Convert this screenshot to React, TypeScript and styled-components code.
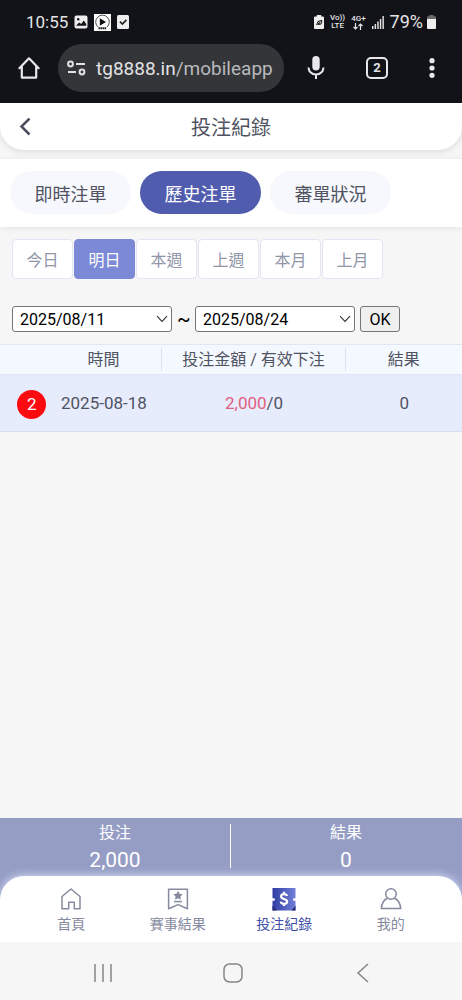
import React, { useState } from "react";
import styled, { createGlobalStyle } from "styled-components";

const GlobalStyle = createGlobalStyle`
  *, *::before, *::after { box-sizing: border-box; }
  body { margin: 0; background: #f6f6f6; }
  body, button, select {
    font-family: Roboto, "Noto Sans CJK TC", sans-serif;
  }
  button { border: 0; padding: 0; background: none; color: inherit; cursor: pointer; }
  svg { display: block; flex: none; }
`;

const Page = styled.div`
  display: flex;
  flex-direction: column;
  min-height: 100vh;
  color: #505362;
`;

const Chrome = styled.header`
  height: 103px;
  background: #121318;
  color: #e4e4e8;
`;

const StatusBar = styled.div`
  display: flex;
  align-items: center;
  justify-content: space-between;
  height: 44px;
  padding: 0 26px;
`;

const StatusGroup = styled.div<{ $gap: number }>`
  display: flex;
  align-items: center;
  gap: ${(p) => p.$gap}px;
`;

const StatusText = styled.span<{ $size: number }>`
  font-size: ${(p) => p.$size}px;
  line-height: 20px;
`;

const Carrier = styled.span`
  display: flex;
  flex-direction: column;
  align-items: center;
  font-size: 8px;
  line-height: 8px;
  font-weight: 500;
`;

const AddressBar = styled.div`
  display: flex;
  align-items: center;
  height: 48px;
  padding: 0 27px 0 17px;
`;

const Address = styled.div`
  display: flex;
  align-items: center;
  gap: 10px;
  flex: 1;
  min-width: 0;
  height: 48px;
  margin: 0 23px 0 17px;
  padding: 0 9px;
  border-radius: 24px;
  background: #343539;
  font-size: 19px;
  white-space: nowrap;
  overflow: hidden;
`;

const Url = styled.span`
  overflow: hidden;
  color: #e2e2e5;
  span { color: #b9babd; }
`;

const BarButtons = styled.div`
  display: flex;
  align-items: center;
  gap: 41px;
`;

const TitleBar = styled.div`
  display: grid;
  grid-template-columns: 50px 1fr 50px;
  align-items: center;
  height: 47px;
  border-radius: 0 0 24px 24px;
  background: #fff;
  box-shadow: 0 2px 6px rgba(0, 0, 0, 0.1);
`;

const BackButton = styled.button`
  display: grid;
  place-items: center;
  height: 47px;
`;

const Title = styled.h1`
  margin: 0;
  padding-top: 2px;
  font-size: 20px;
  line-height: 30px;
  font-weight: 400;
  text-align: center;
`;

const TypeTabs = styled.nav`
  display: flex;
  gap: 9px;
  margin-top: 9px;
  padding: 12px 10px 13px;
  background: #fff;
  box-shadow: 0 1px 6px rgba(0, 0, 0, 0.08);
`;

const TypeTab = styled.button<{ $active: boolean }>`
  width: 121px;
  height: 43px;
  border-radius: 22px;
  background: ${(p) => (p.$active ? "#505cae" : "#f7f8fd")};
  color: ${(p) => (p.$active ? "#fff" : "#505362")};
  font-size: 18px;
`;

const Periods = styled.div`
  display: flex;
  gap: 1px;
  padding: 12px 12px 0;
`;

const Period = styled.button<{ $active: boolean }>`
  width: 61px;
  height: 40px;
  border: 1px solid ${(p) => (p.$active ? "#7b89d6" : "#e3e5f3")};
  border-radius: 4px;
  background: ${(p) => (p.$active ? "#7b89d6" : "#fff")};
  color: ${(p) => (p.$active ? "#fff" : "#9195a8")};
  font-size: 16px;
`;

const RangeForm = styled.form`
  display: flex;
  align-items: center;
  gap: 5px;
  padding: 27px 12px 12px;
  color: #000;
  font-size: 16px;
`;

const SelectBox = styled.label`
  display: grid;
  grid-template-columns: 1fr 16px;
  align-items: center;
  width: 160px;
  > svg { grid-area: 1 / 2; pointer-events: none; }
`;

const DateSelect = styled.select`
  grid-area: 1 / 1 / 2 / 3;
  appearance: none;
  width: 100%;
  height: 26px;
  padding: 0 7px;
  border: 1px solid #767676;
  border-radius: 3px;
  background: #fff;
  color: #000;
  font-size: 16px;
`;

const Tilde = styled.span`
  width: 13px;
  text-align: center;
  font-size: 20px;
  line-height: 26px;
`;

const OkButton = styled.button`
  width: 40px;
  height: 26px;
  border: 1px solid #767676;
  border-radius: 3px;
  background: #efefef;
  font-size: 16px;
`;

const Records = styled.table`
  width: 100%;
  table-layout: fixed;
  border-collapse: collapse;
  font-size: 16px;
  text-align: center;
`;

const HeadCell = styled.th<{ $width: string; $divided?: boolean }>`
  width: ${(p) => p.$width};
  height: 29px;
  padding: 3px 0;
  border-top: 1px solid #e1e6f4;
  border-bottom: 1px solid #e1e6f4;
  background: #f4f8ff;
  font-weight: 400;
  line-height: 24px;
  span {
    display: block;
    height: 23px;
    border-right: 1px solid ${(p) => (p.$divided ? "#dde1ee" : "transparent")};
  }
`;

const Cell = styled.td`
  height: 57px;
  padding: 0;
  border-bottom: 1px solid #d8def1;
  background: #e7ecfd;
  font-size: 17px;
`;

const Badge = styled.span`
  display: grid;
  place-items: center;
  width: 29px;
  height: 29px;
  margin: 2px 0 0 auto;
  border-radius: 50%;
  background: #fb0b10;
  color: #fff;
`;

const Stake = styled.span`
  color: #df6080;
`;

const Summary = styled.section`
  display: grid;
  grid-template-columns: 1fr 1fr;
  margin-top: auto;
  padding: 6px 0 32px;
  background: #959dc5;
  color: #fff;
  text-align: center;
`;

const Total = styled.div<{ $divided?: boolean }>`
  height: 44px;
  border-right: 1px solid ${(p) => (p.$divided ? "#fff" : "transparent")};
  font-size: 16px;
  line-height: 18px;
`;

const TotalValue = styled.div`
  margin-top: 6px;
  font-size: 21px;
  line-height: 24px;
`;

const TabBar = styled.nav`
  display: grid;
  grid-template-columns: repeat(4, 1fr);
  height: 66px;
  margin-top: -24px;
  padding: 0 18px;
  border-radius: 24px 24px 0 0;
  background: #fff;
  box-shadow: 0 -1px 8px rgba(225, 231, 255, 0.8);
`;

const TabLink = styled.a<{ $active?: boolean }>`
  display: flex;
  flex-direction: column;
  align-items: center;
  gap: 2px;
  padding-top: 11px;
  color: ${(p) => (p.$active ? "#414fa8" : "#858a9e")};
  font-size: 14px;
  line-height: 22px;
  text-decoration: none;
`;

const SystemBar = styled.footer`
  display: flex;
  align-items: center;
  justify-content: space-around;
  height: 58px;
  padding: 4px 35px 0 38px;
  background: #f6f6f6;
  color: #85868b;
`;

const Chevron = () => (
  <svg width="12" height="8" viewBox="0 0 12 8" fill="none" stroke="#333" strokeWidth="1.1">
    <path d="M1 1.2 6 6.4 11 1.2" />
  </svg>
);

const PictureIcon = () => (
  <svg width="14" height="14" viewBox="0 0 14 14">
    <rect x=".5" y=".5" width="13" height="13" rx="2" fill="#eee" />
    <circle cx="4.2" cy="4.2" r="1.2" fill="#121318" />
    <path d="M2 10.8 5.2 7.4l2 1.6 2.6-3.4L12.2 9v1.8z" fill="#121318" />
  </svg>
);

const PlayerIcon = () => (
  <svg width="17" height="17" viewBox="0 0 17 17">
    <rect width="17" height="17" fill="#fff" />
    <path d="M4.2 13.2a6.8 6.8 0 1 1 8.6 0" fill="none" stroke="#222" strokeWidth=".8" />
    <path d="M5.8 4.2v7.6l6.2-3.8z" fill="#111" />
    <path d="M4.5 14.2h8" stroke="#222" strokeWidth="2" strokeDasharray="1.6 .4" />
  </svg>
);

const CheckedIcon = () => (
  <svg width="12" height="14" viewBox="0 0 12 14">
    <rect width="12" height="14" rx="1.5" fill="#eee" />
    <path d="m3 6.6 2.4 2.4 4-4.2" fill="none" stroke="#222" strokeWidth="1.7" />
  </svg>
);

const SaverIcon = () => (
  <svg width="10" height="14" viewBox="0 0 10 14">
    <path d="M2.8 1.4V0h4.4v1.4H9a1 1 0 0 1 1 1V13a1 1 0 0 1-1 1H1a1 1 0 0 1-1-1V2.4a1 1 0 0 1 1-1z" fill="#eee" />
    <path d="M2 9.2h2.2M4.200 9.200C2.600 7.200 4.200 5.800 7.700 5.600c.3 2.600-.9 4.200-3.500 3.600zM4.200 9.200l1.800-1.800" fill="none" stroke="#222" strokeWidth="1.1" />
  </svg>
);

const DataArrows = () => (
  <svg width="10" height="7" viewBox="0 0 10 7" fill="none" stroke="currentColor" strokeWidth="1.2">
    <path d="M2.5 0v6M.5 4l2 2 2-2M7.5 7V1M5.5 3l2-2 2 2" />
  </svg>
);

const SignalIcon = () => (
  <svg width="12" height="13" viewBox="0 0 12 13" fill="#ddd">
    <path d="M0 10h1.5v3H0zM2.6 8h1.5v5H2.6zM5.2 5.5h1.5V13H5.2zM7.8 3h1.5v10H7.8zM10.4 0h1.5v13h-1.5z" />
  </svg>
);

const BatteryIcon = () => (
  <svg width="9" height="14" viewBox="0 0 9 14">
    <path d="M2.5 1.3V0h4v1.3H8a1 1 0 0 1 1 1V4H0V2.3a1 1 0 0 1 1-1z" fill="#6a6b6f" />
    <path d="M0 4h9v9a1 1 0 0 1-1 1H1a1 1 0 0 1-1-1z" fill="#eee" />
  </svg>
);

const BrowserHome = () => (
  <svg width="24" height="24" viewBox="0 0 24 24" fill="none" stroke="#e8e8ec" strokeWidth="2.2" strokeLinejoin="round" strokeLinecap="round">
    <path d="M2.400 12.200 12 2.300l9.600 9.900M4.800 10.500V21.600h14.400V10.500" />
  </svg>
);

const SiteIcon = () => (
  <svg width="19" height="16" viewBox="0 0 19 16" fill="none" stroke="#e2e2e5" strokeWidth="2">
    <circle cx="3.5" cy="4" r="2.4" />
    <path d="M9 4h9M1 12h8" />
    <circle cx="15" cy="12" r="2.4" />
  </svg>
);

const MicIcon = () => (
  <svg width="18" height="24" viewBox="0 0 18 24" fill="none" stroke="#e8e8ec" strokeWidth="2">
    <rect x="5.3" y="0" width="7.4" height="14.5" rx="3.7" fill="#e8e8ec" stroke="none" />
    <path d="M1.5 11.5a7.5 7 0 0 0 15 0M9 18.5V23" />
  </svg>
);

const TabCount = styled.span`
  display: grid;
  place-items: center;
  width: 22px;
  height: 22px;
  border: 2px solid #e8e8ec;
  border-radius: 5px;
  font-size: 13px;
  line-height: 16px;
  font-weight: 700;
`;

const MoreIcon = () => (
  <svg width="6" height="20" viewBox="0 0 6 20" fill="#e8e8ec">
    <circle cx="3" cy="2.7" r="2.6" />
    <circle cx="3" cy="10" r="2.6" />
    <circle cx="3" cy="17.3" r="2.6" />
  </svg>
);

const BackIcon = () => (
  <svg width="12" height="18" viewBox="0 0 12 18" fill="none" stroke="#4b4e5e" strokeWidth="2.5">
    <path d="M10.5 .5 2.500 8.500l8 8" />
  </svg>
);

const HomeIcon = () => (
  <svg width="24" height="24" viewBox="0 0 24 24" fill="none" stroke="currentColor" strokeWidth="1.5" strokeLinejoin="round">
    <path d="M3 9.5 12 2l9 7.5v12.300h-5.700v-6.600H9.700v6.600H3z" />
  </svg>
);

const ResultIcon = () => (
  <svg width="24" height="24" viewBox="0 0 24 24" fill="none" stroke="currentColor" strokeWidth="1.5" strokeLinejoin="round">
    <path d="M2.600 2.300h18.800v19.400L12 17.600l-9.400 4.100z" />
    <path d="m12 3.800 1.500 3 3.300.4-2.400 2.300.6 3.300-3-1.600-3 1.600.6-3.300-2.400-2.300 3.300-.4z" fill="currentColor" stroke="none" />
    <path d="M8 14.600h8" />
  </svg>
);

const TicketIcon = () => (
  <svg width="24" height="24" viewBox="0 0 24 24">
    <defs>
      <linearGradient id="ticket" x1="0" y1="0" x2="1" y2="0">
        <stop offset="0" stopColor="#2f3da3" />
        <stop offset="1" stopColor="#7380d8" />
      </linearGradient>
    </defs>
    <path d="M.5 1h23v10.300h-1.300a1.200 1.200 0 0 0 0 2.400h1.300v9.800H.5v-9.800h1.300a1.200 1.200 0 0 0 0-2.400H.5z" fill="url(#ticket)" />
    <path d="M.5 18.500 4.500 23.500h-4zM23.500 18.500l-4 5h4z" fill="#252d70" />
    <path d="M15 9.100c-.3-1.300-1.400-2-3-2-1.700 0-2.900.8-2.900 2.300 0 3.300 6 1.900 6 5 0 1.600-1.300 2.400-3.100 2.400s-3-.8-3.200-2.200M12 4.800v2.300M12 16.600v2.300" fill="none" stroke="#fff" strokeWidth="2.2" />
  </svg>
);

const UserIcon = () => (
  <svg width="24" height="24" viewBox="0 0 24 24" fill="none" stroke="currentColor" strokeWidth="1.5" strokeLinejoin="round">
    <circle cx="12" cy="7" r="5.3" />
    <path d="M8.500 11.300c-3.700 1.500-5.800 4.900-6.200 10.300h19.400c-.4-5.400-2.500-8.800-6.200-10.300" />
  </svg>
);

const RecentsIcon = () => (
  <svg width="18" height="20" viewBox="0 0 18 20" stroke="currentColor" strokeWidth="1.5">
    <path d="M1 1v18M9 1v18M17 1v18" />
  </svg>
);

const SystemHomeIcon = () => (
  <svg width="20" height="20" viewBox="0 0 20 20" fill="none" stroke="currentColor" strokeWidth="1.5">
    <rect x="1" y="1" width="18" height="18" rx="5.5" />
  </svg>
);

const SystemBackIcon = () => (
  <svg width="18" height="20" viewBox="0 0 18 20" fill="none" stroke="currentColor" strokeWidth="1.5">
    <path d="M14 1 4 10l10 9" />
  </svg>
);

const types = ["即時注單", "歷史注單", "審單狀況"];
const periods = ["今日", "明日", "本週", "上週", "本月", "上月"];
const tabs = [
  { label: "首頁", icon: <HomeIcon /> },
  { label: "賽事結果", icon: <ResultIcon /> },
  { label: "投注紀錄", icon: <TicketIcon />, active: true },
  { label: "我的", icon: <UserIcon /> },
];

function DatePicker({ label, value }: { label: string; value: string }) {
  return (
    <SelectBox>
      <DateSelect aria-label={label} defaultValue={value}>
        <option>{value}</option>
      </DateSelect>
      <Chevron />
    </SelectBox>
  );
}

export default function App() {
  const [type, setType] = useState("歷史注單");
  const [period, setPeriod] = useState("明日");

  return (
    <Page>
      <GlobalStyle />
      <Chrome>
        <StatusBar>
          <StatusGroup $gap={6}>
            <StatusText $size={17}>10:55</StatusText>
            <PictureIcon />
            <PlayerIcon />
            <CheckedIcon />
          </StatusGroup>
          <StatusGroup $gap={6}>
            <SaverIcon />
            <Carrier>
              <span>Vo))</span>
              <span>LTE</span>
            </Carrier>
            <Carrier>
              <span>4G+</span>
              <DataArrows />
            </Carrier>
            <SignalIcon />
            <StatusGroup $gap={4}>
              <StatusText $size={18}>79%</StatusText>
              <BatteryIcon />
            </StatusGroup>
          </StatusGroup>
        </StatusBar>
        <AddressBar>
          <button aria-label="首頁"><BrowserHome /></button>
          <Address>
            <SiteIcon />
            <Url>tg8888.in<span>/mobileapp</span></Url>
          </Address>
          <BarButtons>
            <button aria-label="語音搜尋"><MicIcon /></button>
            <button aria-label="分頁"><TabCount>2</TabCount></button>
            <button aria-label="更多"><MoreIcon /></button>
          </BarButtons>
        </AddressBar>
      </Chrome>

      <TitleBar>
        <BackButton aria-label="返回"><BackIcon /></BackButton>
        <Title>投注紀錄</Title>
      </TitleBar>

      <TypeTabs>
        {types.map((t) => (
          <TypeTab key={t} $active={t === type} onClick={() => setType(t)}>{t}</TypeTab>
        ))}
      </TypeTabs>

      <Periods>
        {periods.map((p) => (
          <Period key={p} $active={p === period} onClick={() => setPeriod(p)}>{p}</Period>
        ))}
      </Periods>

      <RangeForm onSubmit={(e) => e.preventDefault()}>
        <DatePicker label="開始日期" value="2025/08/11" />
        <Tilde>~</Tilde>
        <DatePicker label="結束日期" value="2025/08/24" />
        <OkButton type="submit">OK</OkButton>
      </RangeForm>

      <Records>
        <thead>
          <tr>
            <HeadCell $width="10%" />
            <HeadCell $width="25%" $divided><span>時間</span></HeadCell>
            <HeadCell $width="40%" $divided><span>投注金額 / 有效下注</span></HeadCell>
            <HeadCell $width="25%"><span>結果</span></HeadCell>
          </tr>
        </thead>
        <tbody>
          <tr>
            <Cell><Badge>2</Badge></Cell>
            <Cell>2025-08-18</Cell>
            <Cell><Stake>2,000</Stake>/0</Cell>
            <Cell>0</Cell>
          </tr>
        </tbody>
      </Records>

      <Summary>
        <Total $divided>
          投注
          <TotalValue>2,000</TotalValue>
        </Total>
        <Total>
          結果
          <TotalValue>0</TotalValue>
        </Total>
      </Summary>

      <TabBar>
        {tabs.map((t) => (
          <TabLink key={t.label} href="#" $active={t.active}>
            {t.icon}
            {t.label}
          </TabLink>
        ))}
      </TabBar>

      <SystemBar>
        <button aria-label="最近使用"><RecentsIcon /></button>
        <button aria-label="主畫面"><SystemHomeIcon /></button>
        <button aria-label="上一頁"><SystemBackIcon /></button>
      </SystemBar>
    </Page>
  );
}
